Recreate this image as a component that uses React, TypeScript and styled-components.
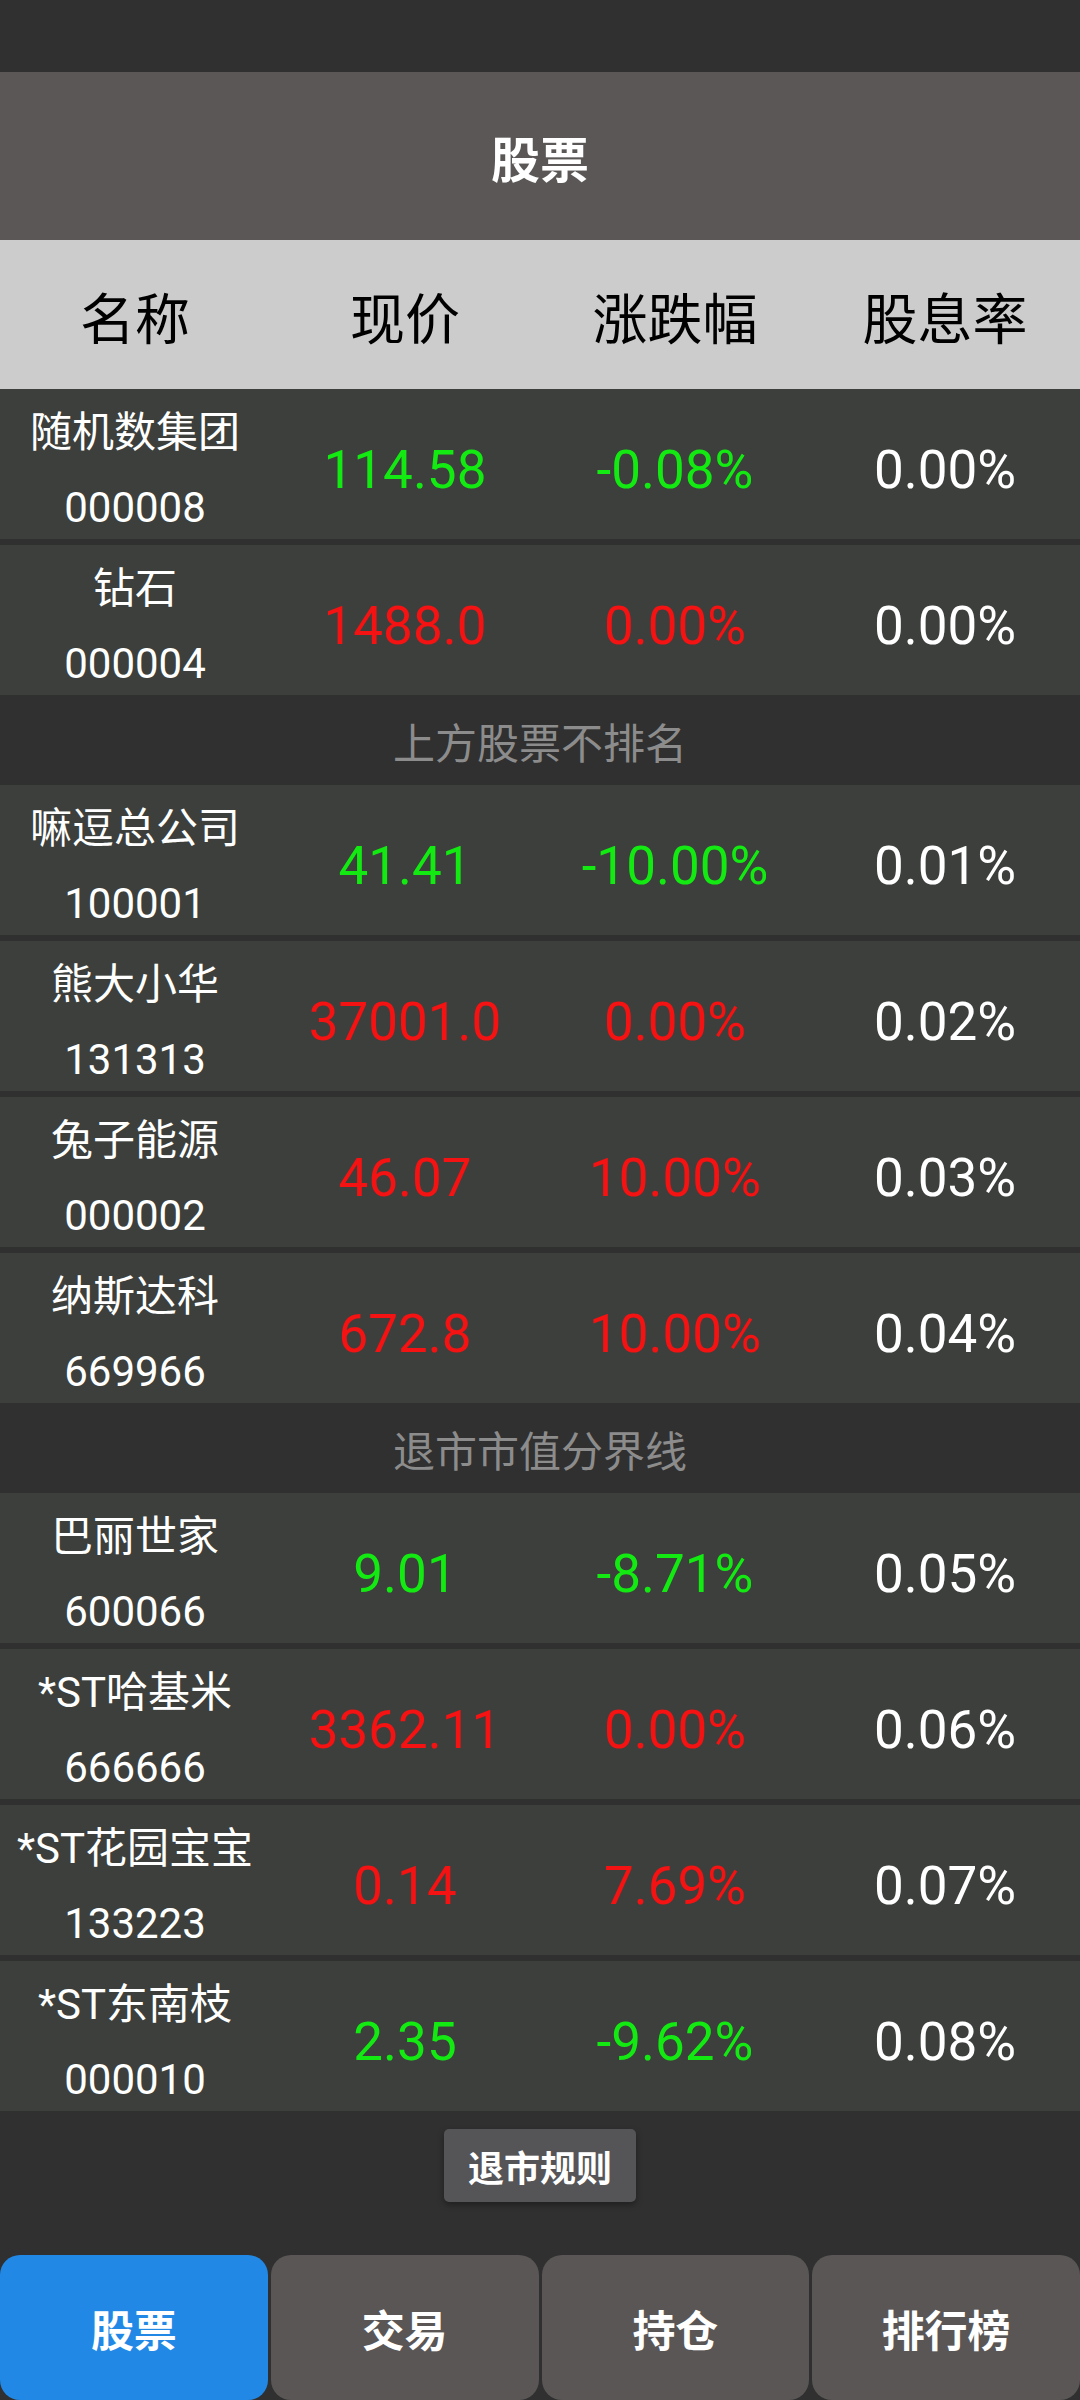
import styled, { createGlobalStyle } from "styled-components";

const GlobalStyle = createGlobalStyle`
  html, body {
    margin: 0;
    padding: 0;
    background: #303030;
  }

  body {
    font-family: Roboto, "Noto Sans CJK SC", sans-serif;
  }
`;

const Screen = styled.div`
  display: flex;
  flex-direction: column;
  width: 1080px;
  min-height: 2400px;
  background: #303030;
`;

const StatusBar = styled.div`
  height: 72px;
  background: #303030;
`;

const AppBar = styled.header`
  align-items: center;
  background: #5a5756;
  color: #ffffff;
  display: flex;
  font-size: 49px;
  font-weight: 700;
  height: 168px;
  justify-content: center;
`;

const HeaderRow = styled.div`
  align-items: center;
  background: #cccccc;
  color: #000000;
  display: grid;
  font-size: 55px;
  grid-template-columns: repeat(4, 1fr);
  height: 149px;
  text-align: center;
`;

const List = styled.div`
  display: flex;
  flex-direction: column;
`;

const Group = styled.div`
  display: flex;
  flex-direction: column;
  gap: 6px;
`;

const Row = styled.div`
  align-items: center;
  background: #3c3f3c;
  display: grid;
  grid-template-columns: repeat(4, 1fr);
  height: 150px;
  text-align: center;
`;

const NameCell = styled.div`
  color: #ffffff;
  display: flex;
  flex-direction: column;
  font-size: 42px;
  line-height: 75px;
  padding-top: 6px;
  white-space: nowrap;
`;

const Value = styled.div<{ $tone: "up" | "down" | "flat" }>`
  color: ${(p) => (p.$tone === "up" ? "#f41212" : p.$tone === "down" ? "#12ea12" : "#ffffff")};
  font-size: 53px;
  padding-top: 6px;
  white-space: nowrap;
`;

const Divider = styled.div`
  align-items: center;
  color: #8c8c8c;
  display: flex;
  font-size: 42px;
  height: 90px;
  justify-content: center;
`;

const Footer = styled.div`
  display: flex;
  height: 144px;
  justify-content: center;
  padding-top: 18px;
  box-sizing: border-box;
`;

const RuleButton = styled.button`
  background: #555457;
  border: none;
  border-radius: 5px;
  box-shadow: 0 3px 6px rgba(0, 0, 0, 0.35);
  color: #ffffff;
  font-family: inherit;
  font-size: 36px;
  font-weight: 700;
  height: 73px;
  width: 192px;
`;

const TabBar = styled.nav`
  display: grid;
  gap: 3px;
  grid-template-columns: repeat(4, 1fr);
  height: 145px;
`;

const Tab = styled.div<{ $active?: boolean }>`
  align-items: center;
  background: ${(p) => (p.$active ? "#2189e5" : "#595655")};
  border-radius: 20px;
  color: #ffffff;
  display: flex;
  font-size: 43px;
  font-weight: 700;
  justify-content: center;
`;

type Stock = {
  name: string;
  code: string;
  price: string;
  change: string;
  yieldRate: string;
};

const pinned: Stock[] = [
  { name: "随机数集团", code: "000008", price: "114.58", change: "-0.08%", yieldRate: "0.00%" },
  { name: "钻石", code: "000004", price: "1488.0", change: "0.00%", yieldRate: "0.00%" },
];

const ranked: Stock[] = [
  { name: "嘛逗总公司", code: "100001", price: "41.41", change: "-10.00%", yieldRate: "0.01%" },
  { name: "熊大小华", code: "131313", price: "37001.0", change: "0.00%", yieldRate: "0.02%" },
  { name: "兔子能源", code: "000002", price: "46.07", change: "10.00%", yieldRate: "0.03%" },
  { name: "纳斯达科", code: "669966", price: "672.8", change: "10.00%", yieldRate: "0.04%" },
];

const delisting: Stock[] = [
  { name: "巴丽世家", code: "600066", price: "9.01", change: "-8.71%", yieldRate: "0.05%" },
  { name: "*ST哈基米", code: "666666", price: "3362.11", change: "0.00%", yieldRate: "0.06%" },
  { name: "*ST花园宝宝", code: "133223", price: "0.14", change: "7.69%", yieldRate: "0.07%" },
  { name: "*ST东南枝", code: "000010", price: "2.35", change: "-9.62%", yieldRate: "0.08%" },
];

// red for zero and rises, green for falls, as in the app
function toneOf(change: string) {
  return change.startsWith("-") ? "down" : "up";
}

function StockRow({ stock }: { stock: Stock }) {
  const tone = toneOf(stock.change);
  return (
    <Row>
      <NameCell>
        <span>{stock.name}</span>
        <span>{stock.code}</span>
      </NameCell>
      <Value $tone={tone}>{stock.price}</Value>
      <Value $tone={tone}>{stock.change}</Value>
      <Value $tone="flat">{stock.yieldRate}</Value>
    </Row>
  );
}

function StockGroup({ stocks }: { stocks: Stock[] }) {
  return (
    <Group>
      {stocks.map((s) => (
        <StockRow key={s.code} stock={s} />
      ))}
    </Group>
  );
}

export default function App() {
  return (
    <>
      <GlobalStyle />
      <Screen>
        <StatusBar />
        <AppBar>股票</AppBar>
        <HeaderRow>
          <div>名称</div>
          <div>现价</div>
          <div>涨跌幅</div>
          <div>股息率</div>
        </HeaderRow>
        <List>
          <StockGroup stocks={pinned} />
          <Divider>上方股票不排名</Divider>
          <StockGroup stocks={ranked} />
          <Divider>退市市值分界线</Divider>
          <StockGroup stocks={delisting} />
        </List>
        <Footer>
          <RuleButton>退市规则</RuleButton>
        </Footer>
        <TabBar>
          <Tab $active>股票</Tab>
          <Tab>交易</Tab>
          <Tab>持仓</Tab>
          <Tab>排行榜</Tab>
        </TabBar>
      </Screen>
    </>
  );
}
